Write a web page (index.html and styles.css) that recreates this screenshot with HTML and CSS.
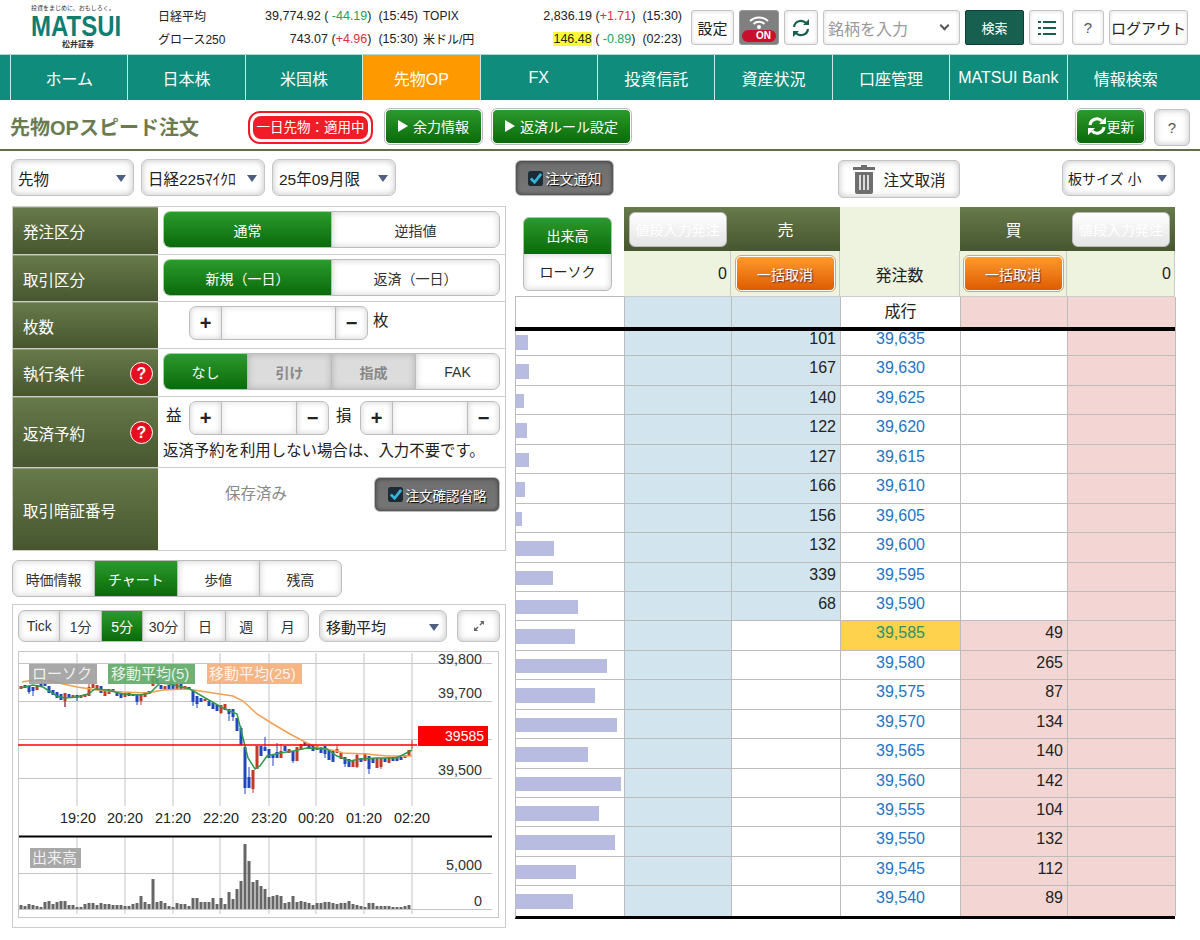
FILE: index.html
```html
<!DOCTYPE html>
<html lang="ja">

<head>
    <meta charset="UTF-8">
    <title>先物OPスピード注文</title>
    <link rel="stylesheet" href="styles.css">
</head>

<body>
    <header class="top">
        <div class="logo">
            <div class="logo-tag">投資をまじめに、おもしろく。</div>
            <div class="logo-name">MATSUI</div>
            <div class="logo-sub">松井証券</div>
        </div>
        <div class="ticker">
            <div class="tick"><span class="tick-name">日経平均</span><span>39,774.92 ( <i class="down">-44.19</i>) &nbsp;(15:45)</span></div>
            <div class="tick"><span class="tick-name">TOPIX</span><span>2,836.19 (<i class="up">+1.71</i>) &nbsp;(15:30)</span></div>
            <div class="tick"><span class="tick-name">グロース250</span><span>743.07 (<i class="up">+4.96</i>) &nbsp;(15:30)</span></div>
            <div class="tick"><span class="tick-name">米ドル/円</span><span><b class="mark">146.48</b> ( <i class="down">-0.89</i>) &nbsp;(02:23)</span></div>
        </div>
        <div class="tools">
            <button class="btn tool-set">設定</button>
            <button class="tool-wifi">
                <svg width="24" height="15" viewBox="0 0 24 15">
                    <path d="M3 7a13 13 0 0 1 18 0M6.500 10a8 8 0 0 1 11 0" fill="none" stroke="#fff" stroke-width="2" />
                    <circle cx="12" cy="13" r="2" fill="#fff" />
                </svg>
                <span class="on-pill">ON</span>
            </button>
            <button class="btn tool-ref">
                <svg width="20" height="20" viewBox="0 0 20 20">
                    <path d="M3 9a7 7 0 0 1 12-4M17 11a7 7 0 0 1-12 4" fill="none" stroke="#17604f" stroke-width="2.200" />
                    <path d="M12 7h6V1zM8 13H2v6z" fill="#17604f" />
                </svg>
            </button>
            <div class="btn tool-search">銘柄を入力<span class="chev"></span></div>
            <button class="tool-go">検索</button>
            <button class="btn tool-list">
                <svg width="18" height="16" viewBox="0 0 18 16">
                    <path d="M0 2h3M5 2h13M0 8h3M5 8h13M0 14h3M5 14h13" stroke="#17604f" stroke-width="2" />
                </svg>
            </button>
            <button class="btn tool-help">?</button>
            <button class="btn tool-out">ログアウト</button>
        </div>
    </header>

    <nav class="nav">
        <a>ホーム</a>
        <a>日本株</a>
        <a>米国株</a>
        <a class="active">先物OP</a>
        <a>FX</a>
        <a>投資信託</a>
        <a>資産状況</a>
        <a>口座管理</a>
        <a>MATSUI Bank</a>
        <a>情報検索</a>
    </nav>

    <div class="title-row">
        <h1>先物OPスピード注文</h1>
        <div class="badge"><span>一日先物：適用中</span></div>
        <button class="btn-green w-yoryoku"><span class="play"></span>余力情報</button>
        <button class="btn-green w-rule"><span class="play"></span>返済ルール設定</button>
        <button class="btn-green w-update">
            <svg width="20" height="20" viewBox="0 0 20 20">
                <path d="M3 9a7 7 0 0 1 12-4M17 11a7 7 0 0 1-12 4" fill="none" stroke="#fff" stroke-width="3" />
                <path d="M12 8h7V1zM8 12H1v7z" fill="#fff" />
            </svg>更新
        </button>
        <button class="btn w-help">?</button>
    </div>

    <main class="main">
        <section class="left">
            <div class="selects">
                <div class="btn select s-type">先物<span class="caret"></span></div>
                <div class="btn select s-name">日経225ﾏｲｸﾛ<span class="caret"></span></div>
                <div class="btn select s-month">25年09月限<span class="caret"></span></div>
            </div>

            <div class="form">
                <div class="form-row r47">
                    <div class="form-label">発注区分</div>
                    <div class="form-body">
                        <div class="seg seg-full"><span class="on">通常</span><span>逆指値</span></div>
                    </div>
                </div>
                <div class="form-row r47">
                    <div class="form-label">取引区分</div>
                    <div class="form-body">
                        <div class="seg seg-full"><span class="on">新規（一日）</span><span>返済（一日）</span></div>
                    </div>
                </div>
                <div class="form-row r47">
                    <div class="form-label">枚数</div>
                    <div class="form-body form-qty">
                        <div class="stepper st-qty"><span>+</span><em></em><span>−</span></div>
                        <div class="unit">枚</div>
                    </div>
                </div>
                <div class="form-row r48">
                    <div class="form-label">執行条件<span class="help">?</span></div>
                    <div class="form-body">
                        <div class="seg seg-full"><span class="on">なし</span><span class="off">引け</span><span class="off">指成</span><span>FAK</span></div>
                    </div>
                </div>
                <div class="form-row r71">
                    <div class="form-label">返済予約<span class="help">?</span></div>
                    <div class="form-body form-oco">
                        <div class="oco-line">
                            <div class="unit">益</div>
                            <div class="stepper st-oco"><span>+</span><em></em><span>−</span></div>
                            <div class="unit unit-2">損</div>
                            <div class="stepper st-oco"><span>+</span><em></em><span>−</span></div>
                        </div>
                        <p class="oco-note">返済予約を利用しない場合は、入力不要です。</p>
                    </div>
                </div>
                <div class="form-row r84">
                    <div class="form-label">取引暗証番号</div>
                    <div class="form-body form-pin">
                        <span class="pin-saved">保存済み</span>
                        <button class="btn-dark w-skip">
                            <svg class="check" viewBox="0 0 16 16"><rect width="16" height="16" rx="3" fill="#1b2a35" /><path d="M3 8l4 4 7-9" fill="none" stroke="#35b4d8" stroke-width="3" /></svg>注文確認省略
                        </button>
                    </div>
                </div>
            </div>

            <div class="seg tabs"><span>時価情報</span><span class="on">チャート</span><span>歩値</span><span>残高</span></div>

            <div class="chart-panel">
                <div class="chart-tools">
                    <div class="seg ranges"><span>Tick</span><span>1分</span><span class="on">5分</span><span>30分</span><span>日</span><span>週</span><span>月</span></div>
                    <div class="btn select s-ma">移動平均<span class="caret"></span></div>
                    <button class="btn w-expand">
                        <svg width="12" height="12" viewBox="0 0 12 12"><path d="M7 5l3-3M5 7l-3 3" stroke="#666" stroke-width="1.500" /><path d="M7 1h4v4zM1 7v4h4z" fill="#666" /></svg>
                    </button>
                </div>

                <svg class="chart" width="481" height="267" viewBox="18 650 481 267">
                    <rect x="18.500" y="650.500" width="480" height="266" fill="#fff" stroke="#c8c8c8" />
                    <path d="M77 652V805M125 652V805M173 652V805M220 652V805M269 652V805M316 652V805M364 652V805M412 652V805M77 836V913M125 836V913M173 836V913M220 836V913M269 836V913M316 836V913M364 836V913M412 836V913" stroke="#c4c4c4" />
                    <path d="M18 662.500H492M18 700.500H492M18 738.500H492M18 777.500H492M18 872.500H492M18 908.500H492" stroke="#c4c4c4" />
                    <path d="M19 835.500H492" stroke="#000" stroke-width="2" />

                    <g class="axis">
                        <text x="482" y="663">39,800</text>
                        <text x="482" y="697">39,700</text>
                        <text x="482" y="735">39,600</text>
                        <text x="482" y="774">39,500</text>
                        <text x="482" y="869">5,000</text>
                        <text x="482" y="905">0</text>
                    </g>
                    <g class="axis-time">
                        <text x="78" y="822">19:20</text>
                        <text x="125" y="822">20:20</text>
                        <text x="173" y="822">21:20</text>
                        <text x="221" y="822">22:20</text>
                        <text x="269" y="822">23:20</text>
                        <text x="316" y="822">00:20</text>
                        <text x="364" y="822">01:20</text>
                        <text x="412" y="822">02:20</text>
                    </g>

                    <!-- candles: wick, then body -->
                    <path stroke="#2147b8" d="M29 685V693M33 686V695M65 692V706M77 694V700M101 685V692M137 694V704M193 689V705M197 695V707M229 708V720M233 708V720M241 725V744M245 746V793M249 766V787M265 736V750M273 754V765M277 742V757M293 750V762M305 741V745M325 745V757M345 756V766M369 760V773" />
                    <path stroke="#c23a2a" d="M65 692V706M89 683V695M141 693V704M153 673V685M221 704V713M253 769V792M257 745V768M281 743V757M297 746V760M337 744V752M357 752V767M381 757V768M412 739V748" />
                    <path fill="none" stroke-width="3" stroke="#2147b8" d="M25 684V687M29 685V691M33 686V690M41 682V686M45 682V685M49 685V692M53 689V694M57 691V697M61 693V699M69 693V696M77 694V697M101 685V692M113 688V691M117 690V695M121 692V697M129 692V695M133 693V695M137 694V701M157 675V683M161 684V688M169 684V689M173 683V689M181 683V688M189 686V689M193 689V701M197 695V703M201 697V701M209 700V705M213 702V708M217 704V710M229 708V713M233 708V716M237 717V730M241 727V744M245 746V787M249 776V787M261 745V755M265 746V750M269 748V757M273 754V757M277 751V757M285 745V750M293 750V760M305 741V745M309 743V747M313 744V750M321 746V752M325 745V753M329 749V759M333 750V761M345 756V763M349 758V766M361 757V761M369 755V768M373 758V762M385 757V761M393 756V760M397 755V760M401 756V759" />
                    <path fill="none" stroke-width="3" stroke="#c23a2a" d="M21 685V688M37 684V689M65 692V700M73 694V696M81 694V697M85 693V696M89 686V695M93 683V687M97 684V689M105 688V695M109 688V693M125 692V696M141 693V700M145 691V696M149 690V693M153 675V685M165 685V689M177 683V688M185 685V688M205 698V700M221 704V712M225 703V709M253 769V788M257 745V768M281 750V757M289 748V752M297 746V760M301 743V749M317 745V749M337 748V752M341 752V758M353 759V766M357 754V766M365 752V760M377 757V767M381 757V766M389 756V762M405 754V757M409 749V755" />
                    <path class="ma25" d="M22 681L33 679L50 680L77 686L97 689L123 691L147 692L163 689L187 688L213 692L233 695L243 700L257 713L273 723L290 733L307 742L320 747L337 750L343 752L367 753L387 755L412 755" />
                    <path class="ma5" d="M20 687L33 684L43 686L57 695L65 697L77 696L88 693L95 688L107 689L123 693L140 694L150 692L160 682L170 683L190 688L207 698L223 707L237 713L243 737L248 757L255 768L260 765L267 755L280 752L293 750L307 747L327 748L337 755L350 760L360 758L377 757L397 757L412 749" />
                    <path d="M18 744H417" stroke="#f00" stroke-width="1.500" />

                    <!-- volume -->
                    <path stroke="#666" stroke-width="3" d="M21 908v-4M25 908v-3M29 908v-5M33 908v-4M37 908v-3M41 908v-2M45 908v-7M49 908v-8M53 908v-5M57 908v-7M61 908v-8M65 908v-8M69 908v-4M73 908v-4M77 908v-2M81 908v-2M85 908v-5M89 908v-6M93 908v-6M97 908v-4M101 908v-6M105 908v-5M109 908v-5M113 908v-4M117 908v-4M121 908v-4M125 908v-3M129 908v-3M133 908v-5M137 908v-6M141 908v-13M145 908v-7M149 908v-5M153 908v-30M157 908v-7M161 908v-8M165 908v-6M169 908v-3M173 908v-2M177 908v-6M181 908v-5M185 908v-5M189 908v-3M193 908v-11M197 908v-11M201 908v-7M205 908v-7M209 908v-7M213 908v-11M217 908v-5M221 908v-11M225 908v-5M229 908v-17M233 908v-10M237 908v-20M241 908v-28M245 908v-65M249 908v-48M253 908v-27M257 908v-29M261 908v-23M265 908v-20M269 908v-12M273 908v-13M277 908v-14M281 908v-13M285 908v-6M289 908v-7M293 908v-13M297 908v-7M301 908v-8M305 908v-7M309 908v-6M313 908v-4M317 908v-6M321 908v-6M325 908v-7M329 908v-7M333 908v-6M337 908v-5M341 908v-6M345 908v-6M349 908v-8M353 908v-5M357 908v-4M361 908v-3M365 908v-2M369 908v-6M373 908v-6M377 908v-3M381 908v-3M385 908v-3M389 908v-3M393 908v-2M397 908v-2M401 908v-2M405 908v-3M409 908v-4" />

                    <rect x="418" y="725" width="70" height="20" fill="#f00" />
                    <text class="last-price" x="484" y="740">39585</text>

                    <g class="legend">
                        <rect x="29" y="663" width="68" height="20" fill="#9e9e9e" opacity=".9" />
                        <text x="32" y="678">ローソク</text>
                        <rect x="108" y="663" width="87" height="20" fill="#5fa866" opacity=".9" />
                        <text x="111" y="678">移動平均(5)</text>
                        <rect x="207" y="663" width="95" height="20" fill="#f4ad78" opacity=".9" />
                        <text x="209" y="678">移動平均(25)</text>
                        <rect x="30" y="847" width="51" height="20" fill="#a8a8a8" />
                        <text x="32" y="862">出来高</text>
                    </g>
                </svg>
            </div>
        </section>

        <section class="right">
            <div class="book-tools">
                <button class="btn-dark w-notify">
                    <svg class="check" viewBox="0 0 16 16"><rect width="16" height="16" rx="3" fill="#1b2a35" /><path d="M3 8l4 4 7-9" fill="none" stroke="#35b4d8" stroke-width="3" /></svg>注文通知
                </button>
                <button class="btn w-cancel">
                    <svg width="24" height="30" viewBox="0 0 24 30">
                        <path d="M9 3V1h6v2h8v3H1V3zM3 8h18v20a2 2 0 0 1-2 2H5a2 2 0 0 1-2-2z" fill="#6e6e6e" />
                        <path d="M8 11v15M12 11v15M16 11v15" stroke="#fff" stroke-width="1.500" />
                    </svg>注文取消
                </button>
                <div class="btn select s-size">板サイズ 小<span class="caret"></span></div>
            </div>

            <div class="book-head">
                <div class="bh-toggle">
                    <div class="toggle"><span class="on">出来高</span><span>ローソク</span></div>
                </div>
                <div class="bh-olive"><button class="btn-price">値段入力発注</button></div>
                <div class="bh-olive">売</div>
                <div class="bh-pale"></div>
                <div class="bh-olive">買</div>
                <div class="bh-olive"><button class="btn-price">値段入力発注</button></div>
                <div class="bh-pale bh-num">0</div>
                <div class="bh-pale"><button class="btn-orange">一括取消</button></div>
                <div class="bh-pale">発注数</div>
                <div class="bh-pale"><button class="btn-orange">一括取消</button></div>
                <div class="bh-pale bh-num">0</div>
            </div>

            <div class="book-row market">
                <div></div><div class="c-sell"></div><div class="c-sell"></div><div class="c-price">成行</div><div class="c-buy"></div><div class="c-buy"></div>
            </div>

            <div class="book-rows">
                <div class="book-row"><div><div class="bar" style="width:12px"></div></div><div class="c-sell"></div><div class="c-sell c-num">101</div><div class="c-price">39,635</div><div></div><div class="c-buy"></div></div>
                <div class="book-row"><div><div class="bar" style="width:13px"></div></div><div class="c-sell"></div><div class="c-sell c-num">167</div><div class="c-price">39,630</div><div></div><div class="c-buy"></div></div>
                <div class="book-row"><div><div class="bar" style="width:8px"></div></div><div class="c-sell"></div><div class="c-sell c-num">140</div><div class="c-price">39,625</div><div></div><div class="c-buy"></div></div>
                <div class="book-row"><div><div class="bar" style="width:11px"></div></div><div class="c-sell"></div><div class="c-sell c-num">122</div><div class="c-price">39,620</div><div></div><div class="c-buy"></div></div>
                <div class="book-row"><div><div class="bar" style="width:13px"></div></div><div class="c-sell"></div><div class="c-sell c-num">127</div><div class="c-price">39,615</div><div></div><div class="c-buy"></div></div>
                <div class="book-row"><div><div class="bar" style="width:9px"></div></div><div class="c-sell"></div><div class="c-sell c-num">166</div><div class="c-price">39,610</div><div></div><div class="c-buy"></div></div>
                <div class="book-row"><div><div class="bar" style="width:6px"></div></div><div class="c-sell"></div><div class="c-sell c-num">156</div><div class="c-price">39,605</div><div></div><div class="c-buy"></div></div>
                <div class="book-row"><div><div class="bar" style="width:38px"></div></div><div class="c-sell"></div><div class="c-sell c-num">132</div><div class="c-price">39,600</div><div></div><div class="c-buy"></div></div>
                <div class="book-row"><div><div class="bar" style="width:37px"></div></div><div class="c-sell"></div><div class="c-sell c-num">339</div><div class="c-price">39,595</div><div></div><div class="c-buy"></div></div>
                <div class="book-row"><div><div class="bar" style="width:62px"></div></div><div class="c-sell"></div><div class="c-sell c-num">68</div><div class="c-price">39,590</div><div></div><div class="c-buy"></div></div>
                <div class="book-row"><div><div class="bar" style="width:59px"></div></div><div class="c-sell"></div><div></div><div class="c-price c-last">39,585</div><div class="c-buy c-num">49</div><div class="c-buy"></div></div>
                <div class="book-row"><div><div class="bar" style="width:91px"></div></div><div class="c-sell"></div><div></div><div class="c-price">39,580</div><div class="c-buy c-num">265</div><div class="c-buy"></div></div>
                <div class="book-row"><div><div class="bar" style="width:79px"></div></div><div class="c-sell"></div><div></div><div class="c-price">39,575</div><div class="c-buy c-num">87</div><div class="c-buy"></div></div>
                <div class="book-row"><div><div class="bar" style="width:101px"></div></div><div class="c-sell"></div><div></div><div class="c-price">39,570</div><div class="c-buy c-num">134</div><div class="c-buy"></div></div>
                <div class="book-row"><div><div class="bar" style="width:72px"></div></div><div class="c-sell"></div><div></div><div class="c-price">39,565</div><div class="c-buy c-num">140</div><div class="c-buy"></div></div>
                <div class="book-row"><div><div class="bar" style="width:105px"></div></div><div class="c-sell"></div><div></div><div class="c-price">39,560</div><div class="c-buy c-num">142</div><div class="c-buy"></div></div>
                <div class="book-row"><div><div class="bar" style="width:83px"></div></div><div class="c-sell"></div><div></div><div class="c-price">39,555</div><div class="c-buy c-num">104</div><div class="c-buy"></div></div>
                <div class="book-row"><div><div class="bar" style="width:99px"></div></div><div class="c-sell"></div><div></div><div class="c-price">39,550</div><div class="c-buy c-num">132</div><div class="c-buy"></div></div>
                <div class="book-row"><div><div class="bar" style="width:60px"></div></div><div class="c-sell"></div><div></div><div class="c-price">39,545</div><div class="c-buy c-num">112</div><div class="c-buy"></div></div>
                <div class="book-row"><div><div class="bar" style="width:57px"></div></div><div class="c-sell"></div><div></div><div class="c-price">39,540</div><div class="c-buy c-num">89</div><div class="c-buy"></div></div>
            </div>
        </section>
    </main>
</body>

</html>
```

FILE: styles.css
```css
* {
    box-sizing: border-box;
}

body {
    margin: 0;
    width: 1200px;
    background: #fff;
    color: #222;
    font-family: "Liberation Sans", "Noto Sans CJK JP", sans-serif;
    font-size: 14px;
}

button {
    margin: 0;
    padding: 0;
    font: inherit;
    color: inherit;
    cursor: pointer;
}

/* shared buttons */
.btn {
    display: flex;
    align-items: center;
    justify-content: center;
    background: #fff;
    border: 1px solid #c4c4c4;
    border-radius: 5px;
    box-shadow: inset 0 0 7px rgba(0, 0, 0, .25);
}

.btn-green {
    display: flex;
    align-items: center;
    justify-content: center;
    height: 35px;
    background: linear-gradient(#2c9a2c, #0a6a0a);
    border: 1px solid #fff;
    outline: 1px solid #bbb;
    border-radius: 5px;
    color: #fff;
    font-size: 14px;
}

.btn-dark {
    display: flex;
    align-items: center;
    justify-content: center;
    background: linear-gradient(#6e6e6e, #767676);
    border: 1px solid #bbb;
    border-radius: 6px;
    box-shadow: inset 0 0 4px rgba(0, 0, 0, .6);
    color: #fff;
    font-size: 14px;
    text-shadow: 1px 1px 1px #000;
}

.check {
    width: 15px;
    height: 15px;
    margin-right: 3px;
}

.select {
    justify-content: flex-start;
    position: relative;
    height: 37px;
    padding-left: 6px;
    font-size: 15.5px;
    border-radius: 7px;
}

.caret {
    position: absolute;
    right: 7px;
    top: 15px;
    border-left: 5px solid transparent;
    border-right: 5px solid transparent;
    border-top: 7px solid #4c5f80;
}

/* header */
.top {
    display: flex;
    height: 54px;
}

.logo {
    width: 158px;
    padding: 5px 0 0 31px;
    color: #0f7d70;
}

.logo-tag {
    width: 94px;
    color: #333;
    font-size: 6px;
    line-height: 6px;
    white-space: nowrap;
}

.logo-name {
    font-size: 30px;
    font-weight: bold;
    line-height: 29px;
    white-space: nowrap;
    transform: scaleX(.8);
    transform-origin: left;
}

.logo-sub {
    width: 94px;
    color: #333;
    font-size: 8px;
    font-weight: bold;
    line-height: 10px;
    text-align: center;
}

.ticker {
    display: grid;
    grid-template-columns: 260px 259px;
    grid-auto-rows: 23px;
    column-gap: 5px;
    width: 524px;
    padding-top: 4px;
    font-size: 12.500px;
}

.tick {
    display: flex;
    justify-content: space-between;
    align-items: center;
    white-space: nowrap;
}

.tick i {
    font-style: normal;
}

.tick-name {
    font-size: 12px;
}

.up {
    color: #e0303c;
}

.down {
    color: #23a05a;
}

.mark {
    background: #ffff33;
    font-weight: normal;
}

.tools {
    display: flex;
    gap: 5px;
    margin: 10px 0 0 9px;
    height: 35px;
}

.tools .btn {
    border-radius: 3px;
    box-shadow: inset 0 0 4px rgba(0, 0, 0, .15);
    font-size: 15px;
}

.tool-set {
    width: 43px;
}

.tool-wifi {
    display: flex;
    flex-direction: column;
    align-items: center;
    width: 40px;
    padding-top: 3px;
    background: #808080;
    border: 1px solid #999;
    border-radius: 3px;
}

.on-pill {
    width: 34px;
    margin-top: 1px;
    padding-left: 9px;
    background: #c8102e;
    border-radius: 6px;
    color: #fff;
    font-size: 10px;
    font-weight: bold;
    line-height: 12px;
}

.tool-ref {
    width: 34px;
}

.tools .tool-search {
    position: relative;
    justify-content: flex-start;
    width: 137px;
    padding-left: 4px;
    color: #999;
    font-size: 16px;
}

.chev {
    position: absolute;
    right: 11px;
    top: 11px;
    width: 7px;
    height: 7px;
    border-right: 2px solid #555;
    border-bottom: 2px solid #555;
    transform: rotate(45deg);
}

.tool-go {
    width: 59px;
    background: #17604f;
    border: 1px solid #123f35;
    border-radius: 2px;
    color: #fff;
    font-size: 13px;
}

.tool-list {
    width: 35px;
}

.tools .tool-help {
    width: 32px;
    margin-left: 3px;
    color: #555;
}

.tool-out {
    width: 79px;
}

/* nav */
.nav {
    display: flex;
    height: 46px;
    padding-left: 10px;
    background: #0f8c7b;
    border-top: 1px solid #a8dcd0;
}

.nav a {
    display: flex;
    align-items: center;
    justify-content: center;
    width: 117.400px;
    border-left: 1px solid #cfeae4;
    color: #fff;
    font-size: 16px;
}

.nav a.active {
    background: #ff9900;
}

/* page title */
.title-row {
    display: flex;
    align-items: center;
    height: 51px;
    padding: 0 10px;
    border-bottom: 2px solid #5f7048;
}

.title-row h1 {
    width: 238px;
    margin: 4px 0 0;
    color: #6b7b4f;
    font-size: 20px;
}

.badge {
    width: 125px;
    height: 33px;
    margin-top: 5px;
    padding: 3px;
    background: #fff;
    border: 2px solid #f01c28;
    border-radius: 12px;
}

.badge span {
    display: block;
    height: 23px;
    background: #f01c28;
    border-radius: 8px;
    color: #fff;
    font-size: 13.500px;
    line-height: 23px;
    text-align: center;
    white-space: nowrap;
}

.play {
    margin-right: 5px;
    border-left: 10px solid #fff;
    border-top: 6px solid transparent;
    border-bottom: 6px solid transparent;
}

.w-yoryoku {
    width: 97px;
    margin: 3px 0 0 12px;
}

.w-rule {
    width: 139px;
    margin: 3px 0 0 10px;
}

.w-update {
    width: 69px;
    margin: 3px 0 0 auto;
}

.w-help {
    width: 36px;
    height: 37px;
    margin: 5px 0 0 9px;
    color: #555;
    font-size: 15px;
}

/* main layout */
.main {
    display: flex;
}

.left {
    width: 504px;
    margin-left: 11px;
    padding-top: 8px;
}

.right {
    width: 660px;
    margin-left: -10px;
    margin-left: 0;
    padding-top: 9px;
}

.main .right {
    margin-left: 0;
}

.selects {
    display: flex;
    gap: 7px;
}

.s-type {
    width: 123px;
}

.s-name {
    width: 124px;
}

.s-month {
    width: 124px;
}

/* segmented control */
.seg {
    display: flex;
    overflow: hidden;
    background: #fff;
    border: 1px solid #bdbdbd;
    border-radius: 7px;
}

.seg > span {
    display: flex;
    flex: 1;
    align-items: center;
    justify-content: center;
    border-right: 1px solid #bbb;
    box-shadow: inset 0 0 7px rgba(0, 0, 0, .2);
    color: #333;
    font-size: 14px;
    white-space: nowrap;
}

.seg > span:last-child {
    border-right: 0;
}

.seg > .on {
    background: linear-gradient(#2c9a2c, #0a6a0a);
    box-shadow: none;
    color: #fff;
}

.seg > .off {
    background: #dcdcdc;
    color: #888;
    font-weight: bold;
}

.seg-full {
    height: 37px;
}

/* order form */
.form {
    width: 494px;
    margin: 10px 0 0 1px;
    border: 1px solid #ccc;
    border-bottom-width: 1px;
}

.form-row {
    display: flex;
    border-top: 1px solid #ccc;
}

.form-row:first-child {
    border-top: 0;
}

.r47 {
    height: 47px;
}

.r48 {
    height: 48px;
}

.r71 {
    height: 71px;
}

.r84 {
    height: 83px;
}

.form-label {
    display: flex;
    align-items: center;
    justify-content: space-between;
    width: 145px;
    padding: 0 5px 0 10px;
    background: linear-gradient(#677a4a, #47562f);
    border-top: 1px solid #8d9c78;
    color: #fff;
    font-size: 15.500px;
}

.form-body {
    flex: 1;
    padding: 4px 5px 0 5px;
}

.help {
    width: 23px;
    height: 23px;
    background: #e5101f;
    border: 1px solid #fff;
    border-radius: 50%;
    color: #fff;
    font-size: 16px;
    font-weight: bold;
    line-height: 21px;
    text-align: center;
}

.stepper {
    display: flex;
    height: 34px;
    overflow: hidden;
    background: #fff;
    border: 1px solid #bdbdbd;
    border-radius: 7px;
}

.stepper span {
    width: 32px;
    border-left: 1px solid #bbb;
    box-shadow: inset 0 0 6px rgba(0, 0, 0, .2);
    font-size: 20px;
    font-weight: bold;
    line-height: 32px;
    text-align: center;
}

.stepper span:first-child {
    border-left: 0;
    border-right: 1px solid #bbb;
}

.stepper em {
    flex: 1;
    box-shadow: inset 0 0 7px rgba(0, 0, 0, .12);
}

.st-qty {
    width: 179px;
}

.st-oco {
    width: 140px;
}

.unit {
    font-size: 15.500px;
    line-height: 30px;
}

.form-qty {
    display: flex;
    gap: 5px;
    padding-left: 31px;
}

.form-oco {
    padding-top: 4px;
}

.oco-line {
    display: flex;
    padding-left: 3px;
}

.oco-line .unit {
    width: 23px;
}

.oco-line .unit-2 {
    width: 24px;
    padding-left: 7px;
    width: 31px;
}

.oco-note {
    margin: 5px 0 0;
    font-size: 15.400px;
    line-height: 22px;
    white-space: nowrap;
}

.form-pin {
    display: flex;
    justify-content: space-between;
    padding-top: 9px;
}

.pin-saved {
    margin: 4px 0 0 62px;
    color: #888;
    font-size: 15.500px;
}

.w-skip {
    width: 126px;
    height: 35px;
    font-size: 13.500px;
}

/* tabs and chart */
.tabs {
    width: 330px;
    height: 37px;
    margin: 9px 0 0 1px;
}

.chart-panel {
    width: 494px;
    height: 324px;
    margin: 7px 0 0 1px;
    padding: 5px;
    border: 1px solid #ccc;
}

.chart-tools {
    display: flex;
    height: 32px;
}

.ranges {
    width: 291px;
}

.ranges > span {
    font-size: 14px;
}

.s-ma {
    width: 128px;
    height: 32px;
    margin-left: 10px;
    font-size: 15px;
}

.s-ma .caret {
    top: 13px;
}

.w-expand {
    width: 43px;
    margin-left: 10px;
}

.chart {
    display: block;
    margin-top: 9px;
}

.ma5,
.ma25 {
    fill: none;
    stroke-width: 1.500;
}

.ma5 {
    stroke: #2f9a4a;
}

.ma25 {
    stroke: #f0a050;
}

.axis text {
    fill: #333;
    font-size: 14.400px;
    text-anchor: end;
}

.axis-time text {
    fill: #222;
    font-size: 14.400px;
    text-anchor: middle;
}

.last-price {
    fill: #fff;
    font-size: 14px;
    text-anchor: end;
}

.legend text {
    fill: #fff;
    fill-opacity: .85;
    font-size: 15px;
}

/* order book */
.book-tools {
    display: flex;
    height: 37px;
}

.w-notify {
    width: 99px;
    height: 36px;
}

.w-cancel {
    width: 122px;
    height: 38px;
    margin-left: 224px;
    font-size: 15.500px;
}

.w-cancel svg {
    margin-right: 7px;
}

.s-size {
    width: 113px;
    height: 36px;
    margin-left: 102px;
    font-size: 14px;
    padding-left: 5px;
}

.s-size .caret {
    top: 14px;
}

.book-head {
    display: grid;
    grid-template-columns: 109px 107px 109px 120px 107px 108px;
    grid-template-rows: 44px 46px;
    margin-top: 10px;
}

.bh-toggle {
    grid-row: span 2;
    padding: 10px 12px 0 8px;
    border-bottom: 1px solid #bbb;
}

.toggle {
    display: flex;
    flex-direction: column;
    height: 74px;
    overflow: hidden;
    background: #fff;
    border: 1px solid #bbb;
    border-radius: 6px;
}

.toggle span {
    flex: 1;
    font-size: 14px;
    line-height: 36px;
    text-align: center;
    box-shadow: inset 0 0 7px rgba(0, 0, 0, .2);
}

.toggle .on {
    background: linear-gradient(#2c9a2c, #0a6a0a);
    box-shadow: none;
    color: #fff;
}

.bh-olive {
    display: flex;
    align-items: center;
    justify-content: center;
    background: linear-gradient(#677a4a, #47562f);
    color: #fff;
    font-size: 16px;
}

.bh-pale {
    display: flex;
    align-items: center;
    justify-content: center;
    background: #eef3df;
    border: 1px solid #ccc;
    border-width: 0 1px 1px 0;
    font-size: 16px;
}

.bh-num {
    justify-content: flex-end;
    padding-right: 3px;
}

.bh-pale:nth-child(4) {
    border: 0;
}

.btn-price {
    width: 98px;
    height: 35px;
    background: linear-gradient(#fff, #e4e4e4);
    border: 1px solid #bbb;
    border-radius: 6px;
    font-size: 14px;
    white-space: nowrap;
}

.btn-orange {
    width: 99px;
    height: 35px;
    background: linear-gradient(#ff9a2e, #dd5c00);
    border: 1px solid #fff;
    outline: 1px solid #d9a56b;
    border-radius: 5px;
    color: #fff;
    font-size: 14px;
    text-shadow: 1px 1px 1px #633;
    white-space: nowrap;
}

.book-row {
    display: grid;
    grid-template-columns: 109px 107px 109px 120px 107px 108px;
    height: 29.450px;
    font-size: 16px;
    line-height: 24px;
}

.book-row > div {
    border-right: 1px solid #bcbcbc;
    border-bottom: 1px solid #bcbcbc;
}

.market {
    height: 30px;
    border-left: 1px solid #bcbcbc;
}

.market > div {
    line-height: 30px;
    border-bottom: 0;
}

.book-rows {
    position: relative;
    border-left: 1px solid #bcbcbc;
    border-bottom: 3px solid #000;
}

.book-rows::before {
    content: "";
    position: absolute;
    left: -1px;
    right: 0;
    top: 0;
    height: 4px;
    background: #000;
}

.book-rows .book-row:last-child > div {
    border-bottom: 0;
}

.c-sell {
    background: #d2e5ee;
}

.c-buy {
    background: #f3d6d3;
}

.c-num {
    padding-right: 4px;
    text-align: right;
}

.c-price {
    color: #1f75c4;
    text-align: center;
}

.market .c-price {
    color: #222;
}

.c-last {
    background: #ffd24d;
    color: #2b8f6e;
}

.bar {
    height: 14.500px;
    margin-top: 8px;
    background: #b8bce0;
}
```
